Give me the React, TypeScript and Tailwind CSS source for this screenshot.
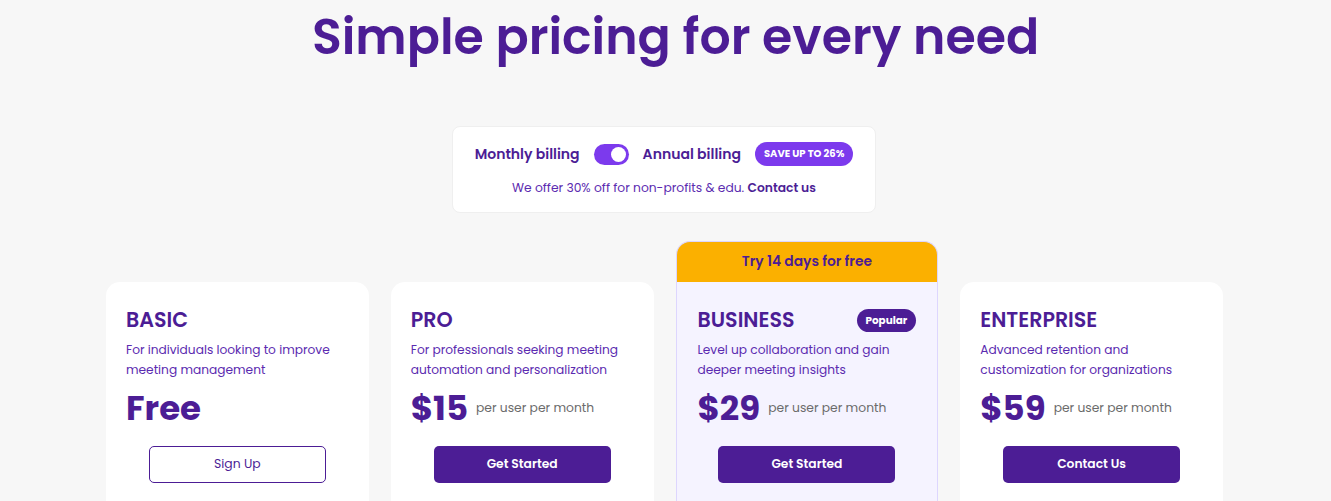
import { useState } from "react";

interface Plan {
  name: string;
  description: string;
  price: string;
  suffix?: string;
  cta: string;
  outline?: boolean;
  featured?: boolean;
}

const plans: Plan[] = [
  {
    name: "BASIC",
    description: "For individuals looking to improve meeting management",
    price: "Free",
    cta: "Sign Up",
    outline: true,
  },
  {
    name: "PRO",
    description: "For professionals seeking meeting automation and personalization",
    price: "$15",
    suffix: "per user per month",
    cta: "Get Started",
  },
  {
    name: "BUSINESS",
    description: "Level up collaboration and gain deeper meeting insights",
    price: "$29",
    suffix: "per user per month",
    cta: "Get Started",
    featured: true,
  },
  {
    name: "ENTERPRISE",
    description: "Advanced retention and customization for organizations",
    price: "$59",
    suffix: "per user per month",
    cta: "Contact Us",
  },
];

function PlanCard({ plan }: { plan: Plan }) {
  return (
    <div className="flex flex-col">
      {plan.featured ? (
        <div className="h-[41px] rounded-t-[14px] border border-b-0 border-[#ddd6fe] bg-[#fbb000] flex items-center justify-center pt-[1px] text-[13.8px] font-semibold text-[#4c1d95]">
          Try 14 days for free
        </div>
      ) : (
        <div className="h-[41px]" />
      )}
      <div
        className={
          plan.featured
            ? "h-[240px] border border-t-0 border-[#ddd6fe] bg-[#f5f3ff] px-[21px] pt-[25px]"
            : "h-[240px] rounded-t-[14px] bg-white px-5 pt-[25px]"
        }
      >
        <div className="flex items-center justify-between">
          <h3 className="text-[20.6px] font-semibold leading-[26px] text-[#4c1d95]">
            {plan.name}
          </h3>
          {plan.featured && (
            <span className="rounded-full bg-[#4c1d95] px-[9px] py-[4px] text-[10.4px] font-bold leading-[15px] text-white">
              Popular
            </span>
          )}
        </div>
        <p className="mt-[7px] text-[12.2px] leading-[20px] text-[#5b2bb0]">
          {plan.description}
        </p>
        <div className="mt-[8px] flex items-center gap-[8px] h-[40px]">
          <span className="text-[34px] font-bold leading-[40px] text-[#4c1d95]">
            {plan.price}
          </span>
          {plan.suffix && (
            <span className="text-[12.3px] text-[#6b6b6b]">{plan.suffix}</span>
          )}
        </div>
        <div className="mt-[18px] flex justify-center">
          <button
            className={
              plan.outline
                ? "h-[37px] w-[177px] rounded-[5px] border border-[#4c1d95] bg-white text-[12.4px] text-[#4c1d95]"
                : "h-[37px] w-[177px] rounded-[5px] bg-[#4c1d95] text-[12.3px] font-semibold text-white"
            }
          >
            {plan.cta}
          </button>
        </div>
      </div>
    </div>
  );
}

export default function App() {
  const [annual, setAnnual] = useState(true);

  return (
    <div
      className="min-h-[501px] bg-[#f7f7f7] overflow-hidden"
      style={{ fontFamily: "Poppins, 'Noto Sans', Lato, sans-serif" }}
    >
      <h1 className="pt-[7px] pl-[20px] text-center text-[49px] font-semibold leading-[60px] text-[#4c1d95]">
        Simple pricing for every need
      </h1>

      <div className="mt-[59px] flex justify-center">
        <div className="ml-[-3px] w-[424px] h-[87px] rounded-[8px] border border-[#efefef] bg-white flex flex-col items-center pt-[15px]">
          <div className="flex items-center gap-[14px]">
            <span className="text-[14px] font-semibold text-[#4c1d95]">Monthly billing</span>
            <button
              onClick={() => setAnnual(!annual)}
              className="relative h-[21px] w-[35px] rounded-full bg-[#7c3aed]"
            >
              <span
                className={
                  annual
                    ? "absolute right-[3px] top-[3px] h-[15px] w-[15px] rounded-full bg-white"
                    : "absolute left-[3px] top-[3px] h-[15px] w-[15px] rounded-full bg-white"
                }
              />
            </button>
            <span className="text-[14px] font-semibold text-[#4c1d95]">Annual billing</span>
            <span className="rounded-full bg-[#7c3aed] px-[9px] py-[5px] text-[10px] font-bold leading-[14px] text-white">
              SAVE UP TO 26%
            </span>
          </div>
          <p className="mt-[13px] text-[12.3px] text-[#5b2bb0]">
            We offer 30% off for non-profits &amp; edu.{" "}
            <span className="font-semibold text-[#4c1d95]">Contact us</span>
          </p>
        </div>
      </div>

      <div className="mt-[28px] ml-[106px] grid w-[1117px] grid-cols-4 gap-[22px]">
        {plans.map((p) => (
          <PlanCard key={p.name} plan={p} />
        ))}
      </div>
    </div>
  );
}
